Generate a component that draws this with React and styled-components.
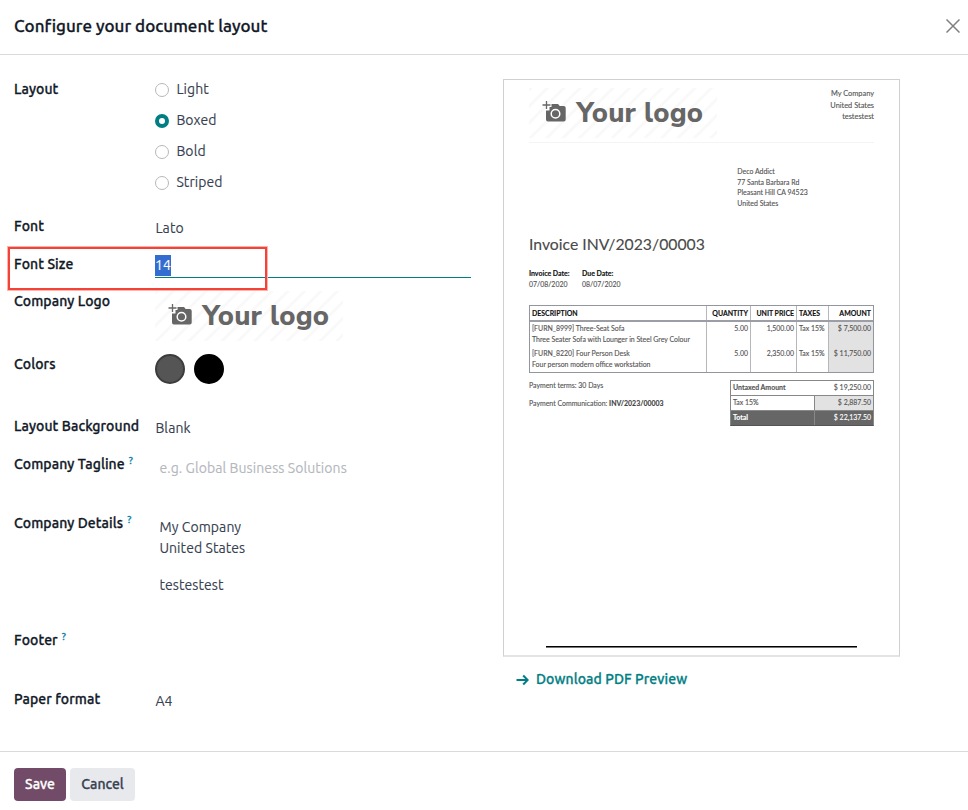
import React from "react";
import styled, { createGlobalStyle } from "styled-components";

const Global = createGlobalStyle`
  *, *::before, *::after { box-sizing: border-box; }
  html, body { margin: 0; background: #fff; }
  body { font: 14px/21px Ubuntu, "Noto Sans", sans-serif; letter-spacing: 0.08px; color: #374151; -webkit-text-stroke: 0.12px; }
`;

const Dialog = styled.div`
  position: relative;
  display: flex;
  flex-direction: column;
  width: 968px;
  height: 810px;
  overflow: hidden;
  background: #fff;
`;
const Header = styled.header`
  display: flex;
  align-items: center;
  justify-content: space-between;
  height: 55px;
  padding: 0 8px 3px 14px;
  border-bottom: 1px solid #d8dadd;
`;
const Title = styled.h1`
  margin: 0;
  font-size: 17px;
  font-weight: 500;
  letter-spacing: 0.02px;
  color: #111827;
  -webkit-text-stroke: 0.3px;
`;
const CloseIcon = styled.svg`
  display: block;
  width: 14px;
  height: 14px;
  fill: none;
  stroke: #7f7f7f;
  stroke-width: 1.5;
`;
const Body = styled.main`
  display: flex;
  flex: 1;
`;
const Form = styled.div`
  width: 457px;
  margin: 24px 32px 0 14px;
`;
const Field = styled.div`
  display: grid;
  grid-template-columns: 141px 1fr;
  align-items: start;
  height: ${(p) => p.$height}px;
`;
const Label = styled.label`
  font-weight: 500;
  letter-spacing: 0.1px;
  color: #111827;
  white-space: nowrap;
  -webkit-text-stroke: 0.3px;
`;
const Help = styled.sup`
  margin-left: 4px;
  font-size: 10px;
  line-height: 0;
  vertical-align: 5px;
  color: #0180a5;
`;
const Value = styled.div`
  padding: ${(p) => p.$pad || "2px 0 0 0.4px"};
  color: ${(p) => (p.$muted ? "#b4b7bd" : "#374151")};
`;
const Paragraph = styled.p`
  margin: 0 0 16px;
`;
const RadioGroup = styled.div`
  display: flex;
  flex-direction: column;
  gap: 10px;
`;
const Option = styled.label`
  display: flex;
  align-items: center;
  gap: 7.4px;
  height: 21px;
`;
const Radio = styled.span`
  width: 14px;
  height: 14px;
  margin-top: 1px;
  border: ${(p) => (p.$checked ? "4px solid #017e84" : "1px solid #b6b8bb")};
  border-radius: 50%;
`;
const SizeInput = styled.div`
  display: flex;
  align-items: flex-start;
  height: 25px;
  padding-top: 2px;
  border-bottom: 1px solid #017e84;
  margin-top: -1px;
`;
const Selected = styled.span`
  height: 21px;
  background: #336dd0;
  color: #fff;
`;
const Swatches = styled.div`
  display: flex;
  gap: 9px;
`;
const Swatch = styled.span`
  width: 30px;
  height: 30px;
  border: 2px solid ${(p) => p.$edge};
  border-radius: 50%;
  background: ${(p) => p.$color};
`;
const LogoDrawing = styled.svg`
  display: block;
  width: 188px;
  height: 50px;
`;
const LogoText = styled.text`
  font: 800 27.500px "Nunito Sans", Lato, sans-serif;
  fill: #666;
  letter-spacing: 0;
`;
const Highlight = styled.div`
  position: absolute;
  left: 7px;
  top: 246px;
  width: 261px;
  height: 45px;
  border: 3px solid #f44336;
  border-color: #f44336;
  outline: 1px solid rgba(255, 255, 255, 0.6);
  outline-offset: -1px;
`;

const Preview = styled.div`
  width: 397px;
  margin-top: 24px;
`;
const Sheet = styled.section`
  display: flex;
  flex-direction: column;
  height: 578px;
  padding: 7px 25px 0;
  border: 1px solid #d0d0d0;
  border-bottom: 2px solid #e4e4e4;
  font: 6.95px/11px Lato, sans-serif;
  letter-spacing: 0;
  color: #555;
`;
const Letterhead = styled.div`
  display: flex;
  justify-content: space-between;
  height: 56px;
  border-bottom: 1px solid #f4f4f4;
  padding-top: 1px;
`;
const CompanyAddress = styled.div`
  font-size: 7.4px;
  line-height: 11.5px;
  text-align: right;
`;
const CustomerAddress = styled.div`
  margin: 23px 0 0 208.3px;
  line-height: 10.6px;
`;
const InvoiceTitle = styled.h2`
  margin: 25px 0 0;
  font-size: 15.75px;
  font-weight: 400;
  line-height: 22px;
  color: #4a4a4a;
`;
const Dates = styled.div`
  display: flex;
  gap: 12.500px;
  margin-top: 13px;
`;
const Strong = styled.strong`
  display: ${(p) => (p.$block ? "block" : "inline")};
  font-weight: 700;
  color: ${(p) => (p.$soft ? "#444" : "#111")};
`;
const Lines = styled.div`
  margin-top: 15px;
  border: 1px solid #93969c;
`;
const LineRow = styled.div`
  display: grid;
  grid-template-columns: 177px 44px 46px 32px 1fr;
  height: ${(p) => (p.$head ? 16 : 25)}px;
  border-bottom: ${(p) => (p.$head ? "2px solid #9b9ea4" : "0")};
  font-weight: ${(p) => (p.$head ? 700 : 400)};
  line-height: ${(p) => (p.$head ? 14 : 11)}px;
  color: ${(p) => (p.$head ? "#111" : "#555")};
`;
const Cell = styled.div`
  padding: ${(p) => (p.$head ? 0 : 1)}px 2px 0;
  border-right: ${(p) => (p.$last ? "0" : "1px solid #b5b7ba")};
  background: ${(p) => (p.$shaded ? "#e2e2e2" : "transparent")};
  text-align: ${(p) => (p.$right ? "right" : "left")};
  white-space: nowrap;
`;
const Summary = styled.div`
  display: flex;
  justify-content: space-between;
  margin-top: 7px;
`;
const Notes = styled.div`
  margin-top: -4px;
  line-height: 18px;
`;
const Totals = styled.div`
  width: 144px;
  border: 1px solid #888;
  border-bottom-color: #555;
`;
const TotalRow = styled.div`
  display: grid;
  grid-template-columns: 84px 1fr;
  height: ${(p) => (p.$dark ? 14 : 15)}px;
  border-bottom: ${(p) => (p.$dark ? "0" : "1px solid #888")};
  line-height: 13px;
  background: ${(p) => (p.$dark ? "#666" : "transparent")};
  color: ${(p) => (p.$dark ? "#fff" : "#555")};
`;
const TotalCell = styled.div`
  padding: 0 2px;
  border-right: ${(p) => (p.$split ? "1px solid #888" : "0")};
  background: ${(p) => (p.$shaded ? "#e2e2e2" : "transparent")};
  font-weight: ${(p) => (p.$bold ? 700 : 400)};
  text-align: ${(p) => (p.$right ? "right" : "left")};
`;
const FooterRule = styled.div`
  height: 2px;
  margin: auto 17px 7px;
  border-top: 1px solid #000;
  background: #777;
`;
const DownloadLink = styled.a`
  display: flex;
  align-items: center;
  gap: 7px;
  margin: 12px 0 0 13px;
  font-weight: 500;
  letter-spacing: 0.1px;
  color: #017e84;
  -webkit-text-stroke: 0.3px;
`;
const ArrowIcon = styled.svg`
  width: 13px;
  height: 12px;
  fill: none;
  stroke: #017e84;
  stroke-width: 2;
`;
const Footer = styled.footer`
  display: flex;
  gap: 4px;
  height: 59px;
  padding: 16px 14px 0;
  border-top: 1px solid #d8dadd;
`;
const Button = styled.button`
  width: ${(p) => p.$width}px;
  height: 33px;
  padding: 0 0 1px;
  border: 0;
  border-radius: 4px;
  background: ${(p) => (p.$primary ? "#714b67" : "#e7e9ed")};
  color: ${(p) => (p.$primary ? "#fff" : "#374151")};
  font: 500 14px/21px Ubuntu, "Noto Sans", sans-serif;
  -webkit-text-stroke: 0.3px;
`;

function Logo({ id }) {
  return (
    <LogoDrawing viewBox="0 0 188 50">
      <defs>
        <pattern id={id} width="11.6" height="12" patternUnits="userSpaceOnUse" patternTransform="rotate(45)">
          <rect width="3" height="12" fill="#f9f9f9" />
        </pattern>
      </defs>
      <rect width="188" height="50" fill={`url(#${id})`} />
      <path d="M17.500 13v8M13.500 17h8" fill="none" stroke="#666" strokeWidth="1.3" />
      <path
        fill="#666"
        d="M22.500 16h6.500l1.700 1.900h4a2 2 0 0 1 2 2v11.600a2 2 0 0 1-2 2H19a2 2 0 0 1-2-2V22.500h3.500V19h2z"
      />
      <circle cx="26.500" cy="25.800" r="4.300" fill="none" stroke="#fff" strokeWidth="1.500" />
      <LogoText x="47.500" y="34" textLength="126.500" lengthAdjust="spacing">
        Your logo
      </LogoText>
    </LogoDrawing>
  );
}

const layouts = ["Light", "Boxed", "Bold", "Striped"];
const products = [
  ["[FURN_8999] Three-Seat Sofa", "Three Seater Sofa with Lounger in Steel Grey Colour", "5.00", "1,500.00", "Tax 15%", "$ 7,500.00"],
  ["[FURN_8220] Four Person Desk", "Four person modern office workstation", "5.00", "2,350.00", "Tax 15%", "$ 11,750.00"],
];

function Invoice() {
  return (
    <Sheet>
      <Letterhead>
        <Logo id="stripes-sheet" />
        <CompanyAddress>
          My Company
          <br />
          United States
          <br />
          testestest
        </CompanyAddress>
      </Letterhead>
      <CustomerAddress>
        Deco Addict
        <br />
        77 Santa Barbara Rd
        <br />
        Pleasant Hill CA 94523
        <br />
        United States
      </CustomerAddress>
      <InvoiceTitle>Invoice INV/2023/00003</InvoiceTitle>
      <Dates>
        <div>
          <Strong $block>Invoice Date:</Strong>07/08/2020
        </div>
        <div>
          <Strong $block>Due Date:</Strong>08/07/2020
        </div>
      </Dates>
      <Lines>
        <LineRow $head>
          <Cell $head>DESCRIPTION</Cell>
          <Cell $head $right>QUANTITY</Cell>
          <Cell $head $right>UNIT PRICE</Cell>
          <Cell $head>TAXES</Cell>
          <Cell $head $right $last>AMOUNT</Cell>
        </LineRow>
        {products.map(([name, detail, quantity, price, tax, amount]) => (
          <LineRow key={name}>
            <Cell>
              {name}
              <br />
              {detail}
            </Cell>
            <Cell $right>{quantity}</Cell>
            <Cell $right>{price}</Cell>
            <Cell>{tax}</Cell>
            <Cell $right $shaded $last>{amount}</Cell>
          </LineRow>
        ))}
      </Lines>
      <Summary>
        <Notes>
          <div>Payment terms: 30 Days</div>
          <div>
            Payment Communication: <Strong $soft>INV/2023/00003</Strong>
          </div>
        </Notes>
        <Totals>
          <TotalRow>
            <TotalCell $bold>Untaxed Amount</TotalCell>
            <TotalCell $right>$ 19,250.00</TotalCell>
          </TotalRow>
          <TotalRow>
            <TotalCell $split>Tax 15%</TotalCell>
            <TotalCell $right $shaded>$ 2,887.50</TotalCell>
          </TotalRow>
          <TotalRow $dark>
            <TotalCell $bold $split>Total</TotalCell>
            <TotalCell $right>$ 22,137.50</TotalCell>
          </TotalRow>
        </Totals>
      </Summary>
      <FooterRule />
    </Sheet>
  );
}

export default function App() {
  return (
    <>
      <Global />
      <Dialog>
        <Header>
          <Title>Configure your document layout</Title>
          <CloseIcon viewBox="0 0 14 14">
            <path d="M0.500 0.500l13 13M13.500 0.500l-13 13" />
          </CloseIcon>
        </Header>
        <Body>
          <Form>
            <Field $height={137}>
              <Label>Layout</Label>
              <RadioGroup>
                {layouts.map((name) => (
                  <Option key={name}>
                    <Radio $checked={name === "Boxed"} />
                    {name}
                  </Option>
                ))}
              </RadioGroup>
            </Field>
            <Field $height={38}>
              <Label>Font</Label>
              <Value>Lato</Value>
            </Field>
            <Field $height={37}>
              <Label>Font Size</Label>
              <SizeInput>
                <Selected>14</Selected>
              </SizeInput>
            </Field>
            <Field $height={63}>
              <Label>Company Logo</Label>
              <Logo id="stripes-form" />
            </Field>
            <Field $height={62}>
              <Label>Colors</Label>
              <Swatches>
                <Swatch $color="#555" $edge="#3c3c3c" />
                <Swatch $color="#000" $edge="#000" />
              </Swatches>
            </Field>
            <Field $height={38}>
              <Label>Layout Background</Label>
              <Value>Blank</Value>
            </Field>
            <Field $height={59}>
              <Label>
                Company Tagline<Help>?</Help>
              </Label>
              <Value $muted $pad="4px 0 0 4.400px">e.g. Global Business Solutions</Value>
            </Field>
            <Field $height={117}>
              <Label>
                Company Details<Help>?</Help>
              </Label>
              <Value $pad="4px 0 0 4.400px">
                <Paragraph>
                  My Company
                  <br />
                  United States
                </Paragraph>
                <Paragraph>testestest</Paragraph>
              </Value>
            </Field>
            <Field $height={59}>
              <Label>
                Footer<Help>?</Help>
              </Label>
            </Field>
            <Field $height={38}>
              <Label>Paper format</Label>
              <Value>A4</Value>
            </Field>
          </Form>
          <Preview>
            <Invoice />
            <DownloadLink>
              <ArrowIcon viewBox="0 0 13 12">
                <path d="M0.500 6h11M7.200 1.500l4.500 4.500-4.500 4.500" />
              </ArrowIcon>
              Download PDF Preview
            </DownloadLink>
          </Preview>
        </Body>
        <Footer>
          <Button $primary $width={52}>Save</Button>
          <Button $width={65}>Cancel</Button>
        </Footer>
        <Highlight />
      </Dialog>
    </>
  );
}
